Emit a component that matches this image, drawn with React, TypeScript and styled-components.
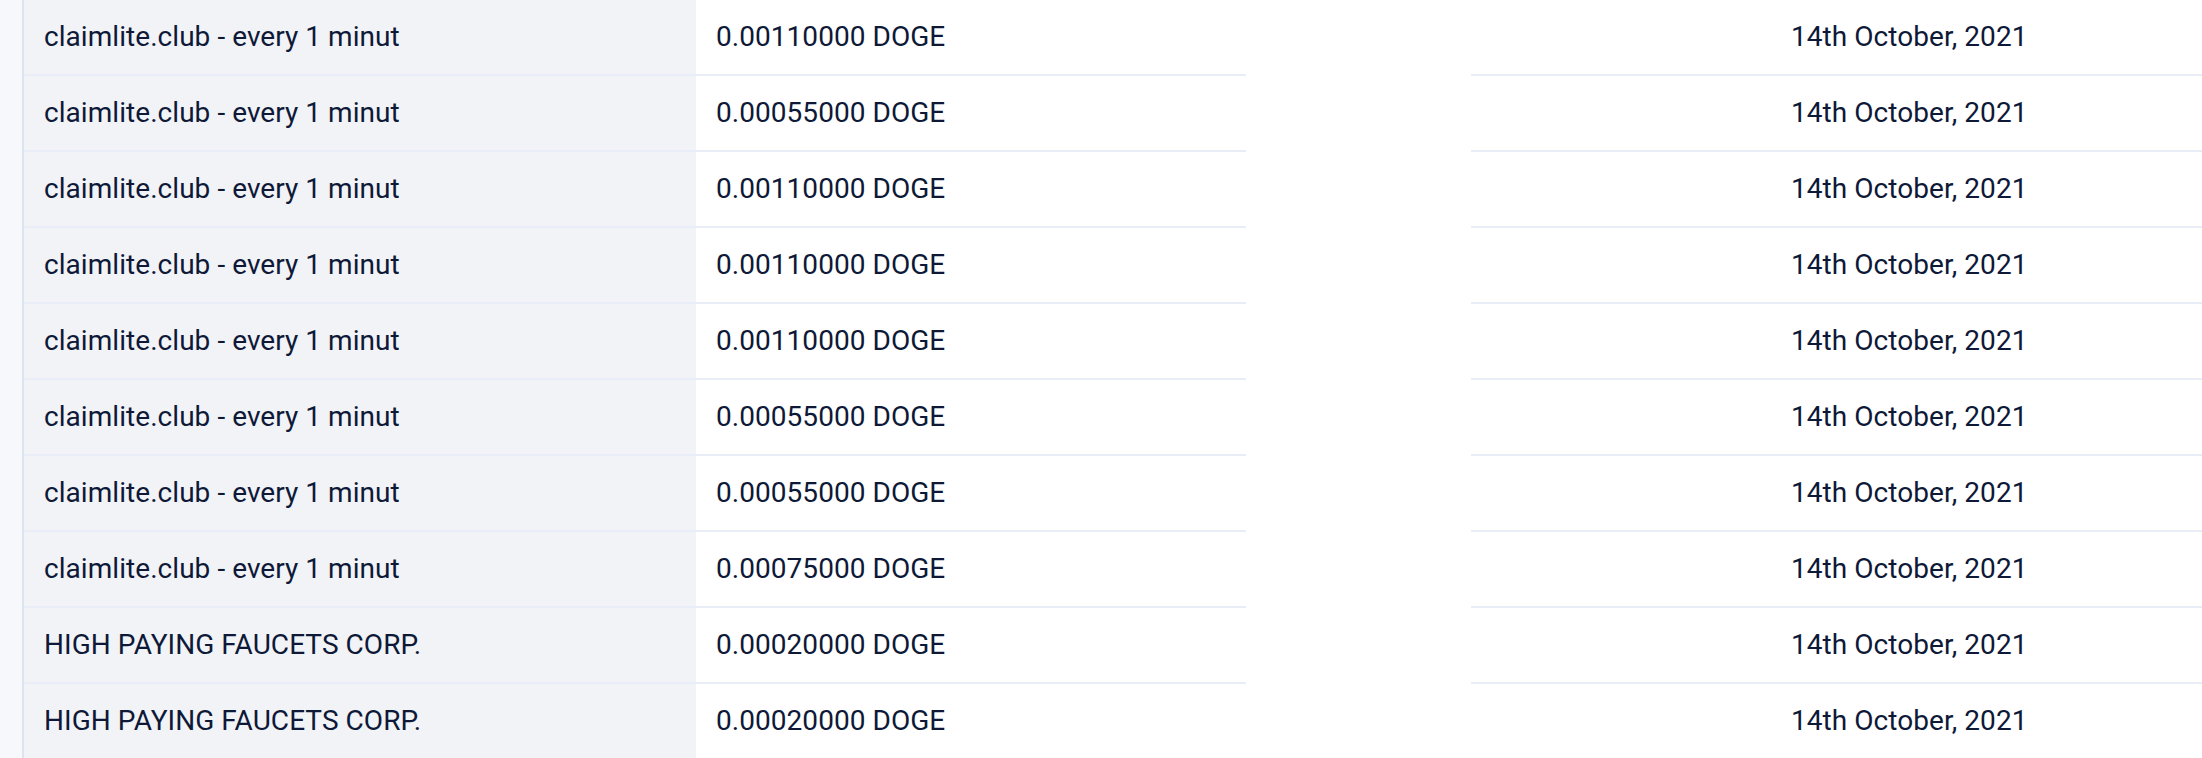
import React from "react";
import styled, { createGlobalStyle } from "styled-components";

const Global = createGlobalStyle`
  html, body {
    margin: 0;
    padding: 0;
    background: #ffffff;
    overflow: hidden;
  }
  body {
    font-family: Roboto, "Noto Sans", "Liberation Sans", sans-serif;
  }
`;

const Page = styled.div`
  display: flex;
  height: 758px;
  overflow: hidden;
  background: #ffffff;
`;

const Rail = styled.div`
  flex: 0 0 22px;
  background: #f7f8fc;
  border-right: 2px solid #dde3ef;
`;

const Table = styled.div`
  flex: 1;
  display: flex;
  flex-direction: column;
  min-width: 0;
`;

const Row = styled.div`
  display: grid;
  grid-template-columns: 672px 550px 225px 1fr;
  height: 76px;
  flex: 0 0 76px;
`;

const Cell = styled.div<{ $shade?: boolean; $bare?: boolean; $pad?: number }>`
  box-sizing: border-box;
  display: flex;
  align-items: center;
  padding-left: ${(p) => p.$pad ?? 20}px;
  background: ${(p) => (p.$shade ? "#f2f3f7" : "transparent")};
  border-bottom: ${(p) => (p.$bare ? "none" : "2px solid #e8edf8")};
  color: #0e1937;
  font-size: 28px;
  line-height: 1;
  white-space: nowrap;
  letter-spacing: 0.05px;
`;

const rows: [string, string][] = [
  ["claimlite.club - every 1 minut", "0.00110000 DOGE"],
  ["claimlite.club - every 1 minut", "0.00055000 DOGE"],
  ["claimlite.club - every 1 minut", "0.00110000 DOGE"],
  ["claimlite.club - every 1 minut", "0.00110000 DOGE"],
  ["claimlite.club - every 1 minut", "0.00110000 DOGE"],
  ["claimlite.club - every 1 minut", "0.00055000 DOGE"],
  ["claimlite.club - every 1 minut", "0.00055000 DOGE"],
  ["claimlite.club - every 1 minut", "0.00075000 DOGE"],
  ["HIGH PAYING FAUCETS CORP.", "0.00020000 DOGE"],
  ["HIGH PAYING FAUCETS CORP.", "0.00020000 DOGE"],
];

export default function App() {
  return (
    <>
      <Global />
      <Page>
        <Rail />
        <Table>
          {rows.map(([name, amount], i) => (
            <Row key={i}>
              <Cell $shade>{name}</Cell>
              <Cell>{amount}</Cell>
              <Cell $bare />
              <Cell $pad={320}>14th October, 2021</Cell>
            </Row>
          ))}
        </Table>
      </Page>
    </>
  );
}
